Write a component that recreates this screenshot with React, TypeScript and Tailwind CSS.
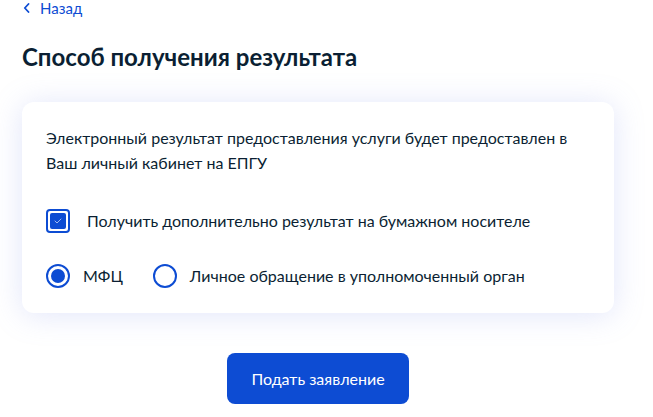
import React from "react";

export default function App() {
  return (
    <div className="min-h-[417px] w-[653px] bg-white text-[#0b1f33]" style={{ fontFamily: "Lato, 'Noto Sans', sans-serif" }}>
      <div className="w-[592px] ml-[22px]">
        <a className="flex items-center h-[16px] text-[15px] leading-[16px] text-[#0d4cd3]">
          <svg width="7" height="10" viewBox="0 0 7 10" className="ml-[1px] mr-[10px]" fill="none">
            <path d="M5.5 1L1.8 5l3.7 4" stroke="#0d4cd3" strokeWidth="1.8" strokeLinecap="round" strokeLinejoin="round" />
          </svg>
          Назад
        </a>
        <h1 className="mt-[25px] text-[24px] leading-[32px] font-bold">Способ получения результата</h1>
        <div className="mt-[29px] bg-white rounded-[12px] shadow-[0_2px_30px_rgba(140,155,235,0.26)] pt-[23px] pb-[25px] px-[24px]">
          <p className="text-[16px] leading-[25px]">
            Электронный результат предоставления услуги будет предоставлен в Ваш личный кабинет на ЕПГУ
          </p>
          <label className="mt-[34px] flex items-center">
            <span className="w-[24px] h-[24px] rounded-[4px] border-2 border-[#0d4cd3] p-[2px] flex">
              <span className="flex-1 rounded-[2px] bg-[#0d4cd3] flex items-center justify-center">
                <svg width="8" height="6" viewBox="0 0 8 6" fill="none">
                  <path d="M1 3l2 2 4-4" stroke="#9fb8f0" strokeWidth="1" strokeLinecap="round" strokeLinejoin="round" />
                </svg>
              </span>
            </span>
            <span className="ml-[17px] text-[16px] leading-[24px]">Получить дополнительно результат на бумажном носителе</span>
          </label>
          <div className="mt-[31px] flex items-center">
            <span className="w-[24px] h-[24px] rounded-full border-2 border-[#0d4cd3] p-[3px] flex">
              <span className="flex-1 rounded-full bg-[#0d4cd3]" />
            </span>
            <span className="ml-[13px] text-[16px] leading-[24px]">МФЦ</span>
            <span className="ml-[30px] w-[24px] h-[24px] rounded-full border-2 border-[#0d4cd3]" />
            <span className="ml-[13px] text-[16px] leading-[24px]">Личное обращение в уполномоченный орган</span>
          </div>
        </div>
        <div className="mt-[40px] flex justify-center">
          <button className="w-[182px] h-[51px] rounded-[8px] bg-[#0d4cd3] text-white text-[16px]">Подать заявление</button>
        </div>
      </div>
    </div>
  );
}
